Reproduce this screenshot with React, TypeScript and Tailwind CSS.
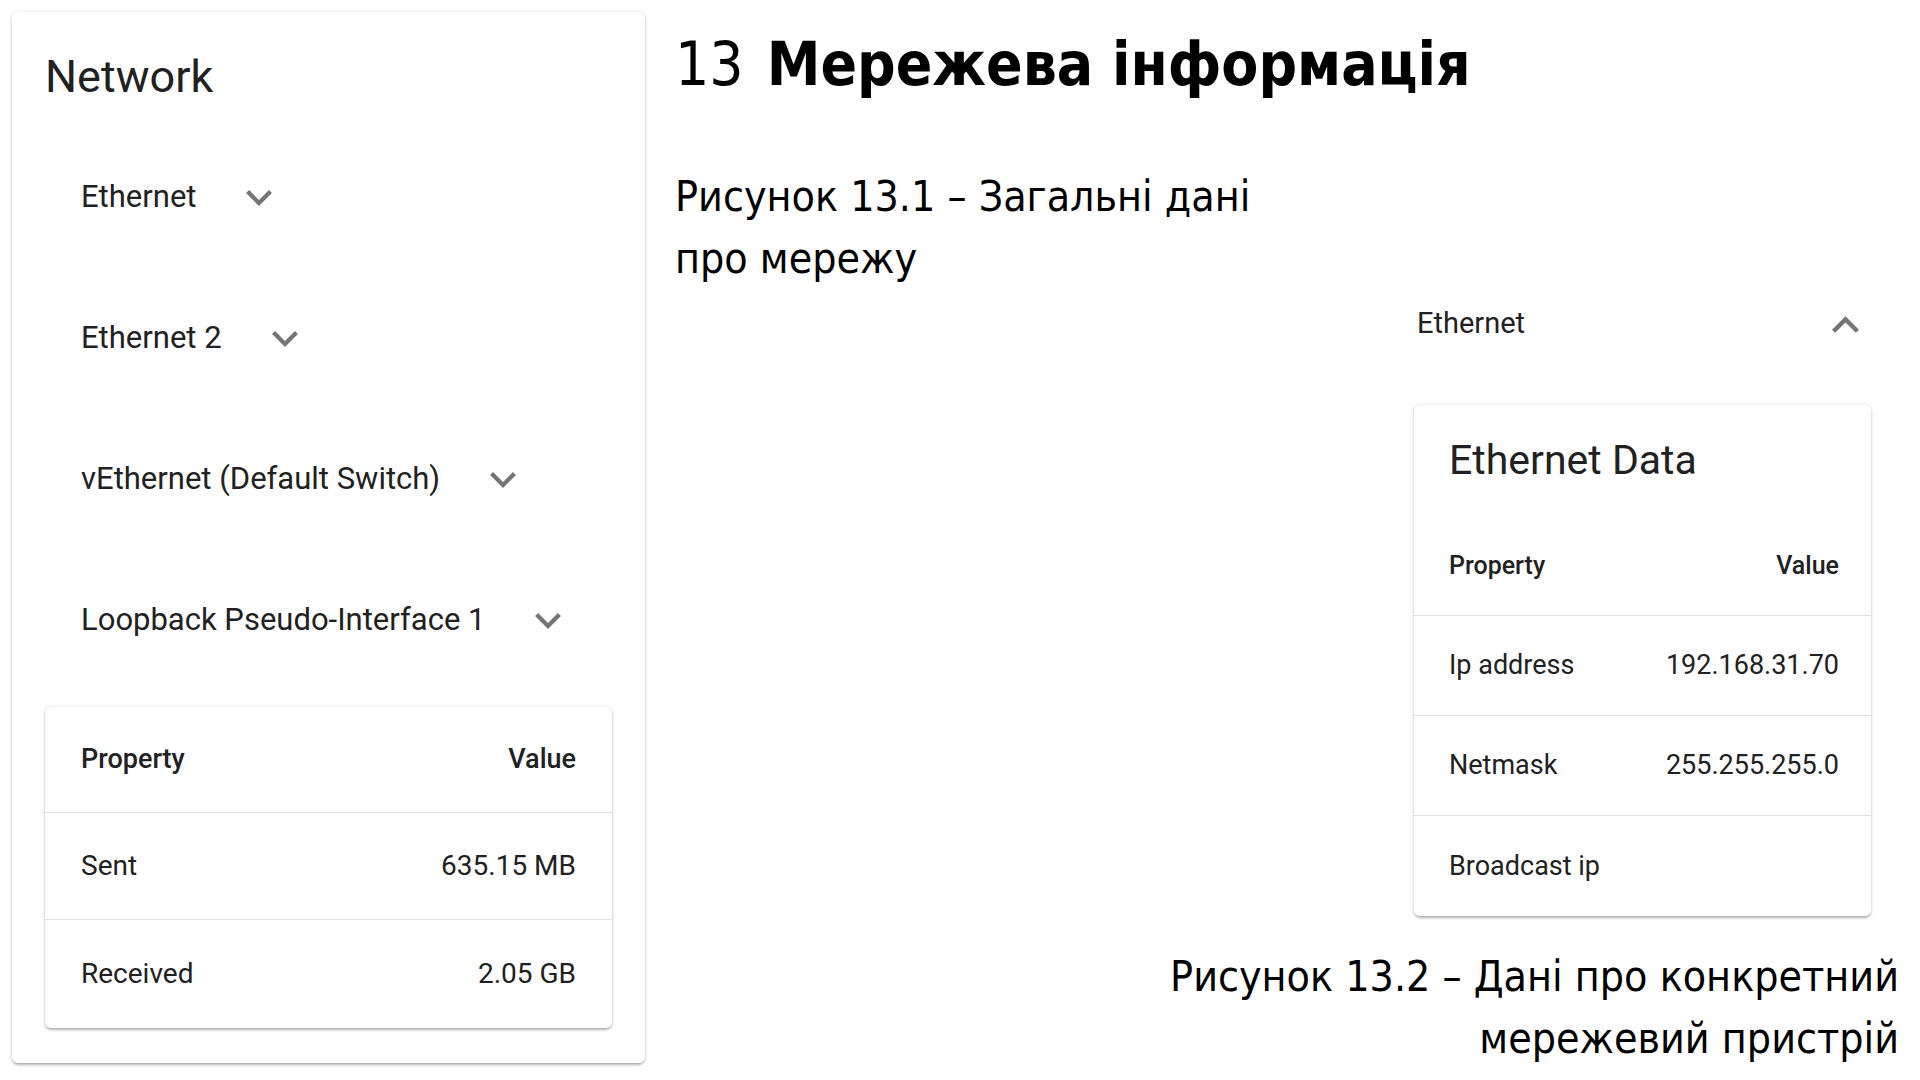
const ui = "font-['Roboto',sans-serif]"
const doc = "font-['DejaVu_Sans_Condensed','DejaVu_Sans',sans-serif] font-stretch-condensed text-black"

function ChevronDown() {
  return (
    <svg viewBox="6 8.59 12 7.41" className="w-[26px] h-[16px] fill-[#757575]">
      <path d="M16.59 8.59 12 13.17 7.41 8.59 6 10l6 6 6-6z" />
    </svg>
  )
}

function ChevronUp() {
  return (
    <svg viewBox="6 8 12 7.41" className="w-[27px] h-[17px] fill-[#757575]">
      <path d="M12 8l-6 6 1.41 1.41L12 10.83l4.59 4.58L18 14z" />
    </svg>
  )
}

const cardShadow =
  'shadow-[0_3px_3px_-1px_rgba(0,0,0,0.22),0_1px_3px_0_rgba(0,0,0,0.14),0_0_5px_0_rgba(0,0,0,0.08)]'

const interfaces = [
  'Ethernet',
  'Ethernet 2',
  'vEthernet (Default Switch)',
  'Loopback Pseudo-Interface 1',
]

const traffic = [
  ['Sent', '635.15 MB'],
  ['Received', '2.05 GB'],
]

const ethernet = [
  ['Ip address', '192.168.31.70'],
  ['Netmask', '255.255.255.0'],
  ['Broadcast ip', ''],
]

export default function App() {
  return (
    <div className="w-[1920px] h-[1080px] bg-white flex overflow-hidden">
      {/* Network overview card */}
      <div
        className={`ml-3 mt-3 w-[633px] h-[1051px] rounded-md bg-white px-[33px] flex flex-col ${cardShadow} ${ui}`}
      >
        <h2 className="mt-[38px] h-[54px] leading-[54px] text-[45px] text-[#212121]">Network</h2>

        <div className="mt-[23px] flex flex-col">
          {interfaces.map((name) => (
            <div key={name} className="h-[141px] pl-[36px] flex items-center">
              <span className="text-[31px] text-[#212121]">{name}</span>
              <span className="ml-[50px] flex items-center">
                <ChevronDown />
              </span>
            </div>
          ))}
        </div>

        <div className={`mt-[16px] h-[321px] rounded-md bg-white flex flex-col ${cardShadow}`}>
          <div className="h-[106px] px-[36px] flex items-center justify-between border-b border-[#e0e0e0] text-[27px] font-medium text-[#212121]">
            <span>Property</span>
            <span>Value</span>
          </div>
          {traffic.map(([k, v], i) => (
            <div
              key={k}
              className={`h-[107px] px-[36px] flex items-center justify-between text-[28px] text-[#212121] ${
                i === 0 ? 'border-b border-[#e0e0e0]' : ''
              }`}
            >
              <span>{k}</span>
              <span>{v}</span>
            </div>
          ))}
        </div>
      </div>

      {/* Document side */}
      <div className="ml-[30px] flex-1 flex flex-col">
        <h1 className={`mt-[29px] h-[71px] leading-[71px] text-[60px] ${doc}`}>
          13<span className="ml-[23px] font-bold">Мережева інформація</span>
        </h1>

        <p className={`mt-[66px] leading-[62px] text-[42.5px] ${doc}`}>
          Рисунок 13.1 – Загальні дані
          <br />
          про мережу
        </p>

        <div className={`ml-[739px] w-[457px] flex flex-col ${ui}`}>
          <div className="mt-[4px] h-[60px] pl-[3px] pr-[12px] flex items-center justify-between">
            <span className="text-[29px] text-[#212121]">Ethernet</span>
            <ChevronUp />
          </div>

          <div className={`mt-[51px] h-[511px] rounded-md bg-white flex flex-col ${cardShadow}`}>
            <div className="h-[111px] px-[35px] flex items-center text-[41px] text-[#212121]">
              Ethernet Data
            </div>
            <div className="h-[100px] pl-[35px] pr-[32px] flex items-center justify-between border-b border-[#e0e0e0] text-[25px] font-medium text-[#212121]">
              <span>Property</span>
              <span>Value</span>
            </div>
            {ethernet.map(([k, v], i) => (
              <div
                key={k}
                className={`h-[100px] pl-[35px] pr-[32px] flex items-center justify-between text-[27px] text-[#212121] ${
                  i < 2 ? 'border-b border-[#e0e0e0]' : ''
                }`}
              >
                <span>{k}</span>
                <span>{v}</span>
              </div>
            ))}
          </div>
        </div>

        <p className={`mt-[30px] pr-[21px] text-right leading-[62px] text-[42.5px] ${doc}`}>
          Рисунок 13.2 – Дані про конкретний
          <br />
          мережевий пристрій
        </p>
      </div>
    </div>
  )
}
